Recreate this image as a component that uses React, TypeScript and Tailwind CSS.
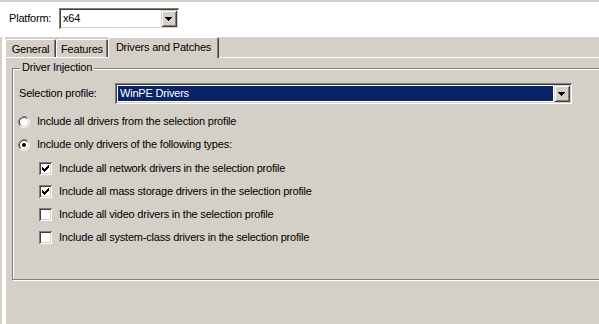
import React from "react";

const sunken =
  "shadow-[inset_1px_1px_0_#808080,inset_-1px_-1px_0_#ffffff,inset_2px_2px_0_#404040,inset_-2px_-2px_0_#d4d0c8]";
const raised =
  "shadow-[inset_1px_1px_0_#d4d0c8,inset_-1px_-1px_0_#404040,inset_2px_2px_0_#ffffff,inset_-2px_-2px_0_#808080]";

function Arrow() {
  return (
    <svg width="16" height="17" viewBox="0 0 16 17" shapeRendering="crispEdges">
      <path d="M4 7h7v1h-1v1h-1v1h-1v1h-1v-1h-1v-1h-1v-1h-1z" fill="#000" />
    </svg>
  );
}

function DropButton() {
  return (
    <div className={`w-[16px] h-[17px] bg-[#d4d0c8] flex-none ${raised}`}>
      <Arrow />
    </div>
  );
}

function Radio({ checked }: { checked?: boolean }) {
  return (
    <svg width="12" height="12" viewBox="0 0 12 12" className="flex-none">
      <circle cx="6" cy="6" r="5" fill="#fff" />
      <path d="M2.11 9.89 A5.5 5.5 0 0 1 9.89 2.11" stroke="#808080" fill="none" />
      <path d="M9.89 2.11 A5.5 5.5 0 0 1 2.11 9.89" stroke="#ffffff" fill="none" />
      <path d="M2.82 9.18 A4.5 4.5 0 0 1 9.18 2.82" stroke="#404040" fill="none" />
      <path d="M9.18 2.82 A4.5 4.5 0 0 1 2.82 9.18" stroke="#d4d0c8" fill="none" />
      {checked && <circle cx="6" cy="6" r="2" fill="#000" />}
    </svg>
  );
}

function Checkbox({ checked }: { checked?: boolean }) {
  const cols = [2, 3, 4, 3, 2, 1, 0];
  return (
    <div className={`w-[13px] h-[13px] bg-white flex-none ${sunken}`}>
      {checked && (
        <svg width="13" height="13" viewBox="0 0 13 13" shapeRendering="crispEdges">
          {cols.map((t, i) => (
            <rect key={i} x={3 + i} y={3 + t} width="1" height="3" fill="#000" />
          ))}
        </svg>
      )}
    </div>
  );
}

export default function App() {
  const checks = [
    { label: "Include all network drivers in the selection profile", checked: true },
    { label: "Include all mass storage drivers in the selection profile", checked: true },
    { label: "Include all video drivers in the selection profile", checked: false },
    { label: "Include all system-class drivers in the selection profile", checked: false },
  ];
  return (
    <div className="w-[599px] h-[324px] overflow-hidden bg-white text-[11px] tracking-[-0.2px] leading-none text-black font-['Liberation_Sans',Arial,sans-serif] flex flex-col">
      <div className="h-[2px] bg-[#d4d0c8] flex-none" />
      <div className="h-[35px] flex-none flex items-start">
        <div className="mt-[6px] h-[21px] flex items-center">
          <div className="w-[59px] pl-[9px]">Platform:</div>
          <div className={`w-[120px] h-[21px] bg-white p-[2px] flex items-center ${sunken}`}>
            <div className="flex-1 pl-[2px]">x64</div>
            <DropButton />
          </div>
        </div>
      </div>
      <div className="flex-1 flex flex-row min-h-0">
        <div className="w-[2px] bg-[#d4d0c8] flex-none" />
        <div className="w-[3px] bg-white flex-none" />
        <div className="flex-1 bg-[#d4d0c8] flex flex-col min-w-0">
          <div className="h-[20px] flex-none flex items-end relative z-10">
            <div className="w-[51px] h-[18px] pt-[3px] flex items-center justify-center rounded-t-[2px] shadow-[inset_1px_1px_0_#fff,inset_-1px_0_0_#404040,inset_-2px_0_0_#808080]">
              General
            </div>
            <div className="w-[52px] h-[18px] pt-[3px] flex items-center justify-center rounded-t-[2px] shadow-[inset_1px_1px_0_#fff,inset_-1px_0_0_#404040,inset_-2px_0_0_#808080]">
              Features
            </div>
            <div className="w-[111px] h-[21px] -mb-[1px] pb-[1px] bg-[#d4d0c8] flex items-center justify-center rounded-t-[2px] shadow-[inset_1px_1px_0_#fff,inset_-1px_0_0_#404040,inset_-2px_0_0_#808080]">
              Drivers and Patches
            </div>
          </div>
          <div className="flex-1 border-t border-l border-white flex flex-col">
            <div className="ml-[6px] mt-[10px] w-[620px] h-[212px] flex-none border border-[#808080] shadow-[inset_1px_1px_0_#fff,1px_1px_0_#fff] relative flex flex-col">
              <div className="absolute left-[7px] -top-[7px] px-[2px] bg-[#d4d0c8]">Driver Injection</div>
              <div className="mt-[14px] h-[21px] flex items-center">
                <div className="w-[102px] pl-[6px]">Selection profile:</div>
                <div className={`w-[457px] h-[21px] bg-white p-[2px] flex items-stretch ${sunken}`}>
                  <div className="flex-1 m-[1px] bg-[#0a246a] text-white pl-[2px] flex items-center">WinPE Drivers</div>
                  <DropButton />
                </div>
              </div>
              <div className="mt-[6px] h-[23px] flex items-center pl-[5px]">
                <Radio />
                <span className="ml-[7px]">Include all drivers from the selection profile</span>
              </div>
              <div className="h-[23px] flex items-center pl-[5px]">
                <Radio checked />
                <span className="ml-[7px]">Include only drivers of the following types:</span>
              </div>
              <div className="mt-[1px] flex flex-col">
                {checks.map((c) => (
                  <div key={c.label} className="h-[23px] flex items-center pl-[26px]">
                    <Checkbox checked={c.checked} />
                    <span className="ml-[7px]">{c.label}</span>
                  </div>
                ))}
              </div>
            </div>
          </div>
        </div>
      </div>
    </div>
  );
}
